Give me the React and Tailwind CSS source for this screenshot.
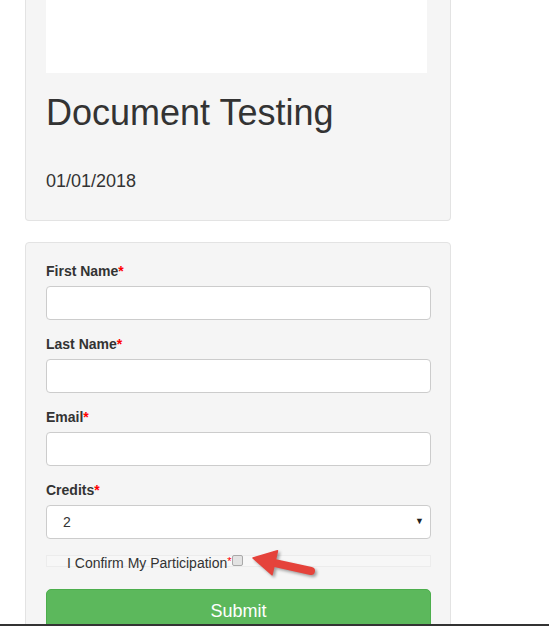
import React from 'react';

const fields = ['First Name', 'Last Name', 'Email'];

const Label = ({ text }) => (
  <label className="block text-[14px] leading-[20px] font-bold text-[#333] mb-[5px]">
    {text}
    <span className="text-[#ff0000]">*</span>
  </label>
);

const Arrow = () => (
  <svg
    className="absolute left-[245px] top-[545px] drop-shadow-[2px_2px_1.5px_rgba(0,0,0,0.35)]"
    width="75"
    height="40"
    viewBox="0 0 75 40"
  >
    <line x1="29" y1="17.8" x2="66" y2="26" stroke="#e5433b" strokeWidth="8" strokeLinecap="round" />
    <polygon points="8,13 32.5,5.8 27,29.8" fill="#e5433b" stroke="#e5433b" strokeWidth="1.5" strokeLinejoin="round" />
  </svg>
);

export default function App() {
  return (
    <div className="h-[626px] w-[549px] flex flex-col bg-white font-['Liberation_Sans',Arial,sans-serif] text-[#333]">
      <div className="relative flex-1 overflow-hidden">
        <div className="ml-[25px] w-[426px]">
          {/* event card */}
          <div className="bg-[#f5f5f5] border border-t-0 border-[#e3e3e3] rounded-b-[4px] px-[20px] pb-[26px]">
            <div className="h-[73px] w-[381px] bg-white" />
            <h1 className="mt-[20px] text-[36px] leading-[40px] font-normal">Document Testing</h1>
            <p className="mt-[35px] text-[18px] leading-[26px]">01/01/2018</p>
          </div>

          {/* registration form */}
          <div className="mt-[21px] bg-[#f5f5f5] border border-[#e3e3e3] rounded-[4px] px-[20px] pt-[18px] pb-[40px]">
            {fields.map((f) => (
              <div key={f} className="mb-[14px]">
                <Label text={f} />
                <div className="h-[34px] w-[385px] bg-white border border-[#ccc] rounded-[4px]" />
              </div>
            ))}
            <div>
              <Label text="Credits" />
              <div className="h-[34px] w-[385px] bg-white border border-[#ccc] rounded-[4px] flex items-center justify-between pl-[16px] pr-[6px] text-[14px]">
                <span>2</span>
                <span className="text-[9px] text-[#222]">▼</span>
              </div>
            </div>
            <div className="mt-[16px] h-[12px] w-[385px] border border-[#ececec] bg-[#f7f7f7]">
              <div className="-mt-[3px] pl-[20px] flex items-start text-[14px] leading-[20px]">
                <span>I Confirm My Participation</span>
                <span className="text-[#ff0000] text-[11px] leading-[16px]">*</span>
                <span className="mt-[2px] w-[11px] h-[11px] border border-[#a9a9a9] bg-[#e3e3e3] rounded-[2px]" />
              </div>
            </div>
            <button className="mt-[22px] h-[46px] w-[385px] bg-[#5cb85c] border border-[#4cae4c] rounded-[5px] text-white text-[18px] leading-[26px] pb-[2px]">
              Submit
            </button>
          </div>
        </div>
        <Arrow />
      </div>
      <div className="h-[2px] bg-[#333]" />
    </div>
  );
}
